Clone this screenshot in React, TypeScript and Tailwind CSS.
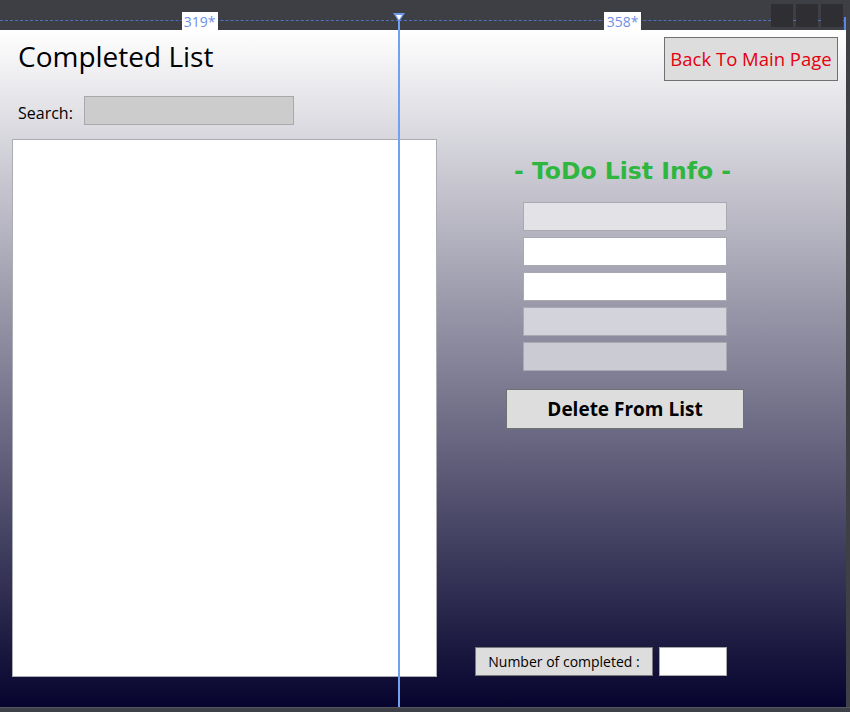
import React from 'react'

const ui = { fontFamily: '"Open Sans", "Noto Sans", sans-serif' }

function Ruler() {
  return (
    <div className="relative h-[30px] bg-[#3e3e45] flex">
      {/* column segments with size labels */}
      <div className="w-[399px] relative flex justify-center items-end">
        <div className="absolute left-0 right-0 top-[20px] border-t border-dashed border-[#4f72bf]" />
        <div className="relative bg-white h-[18px] w-[36px] flex items-center justify-center text-[14px] text-[#6f8fe6]" style={ui}>
          319*
        </div>
      </div>
      <div className="w-[447px] relative flex justify-center items-end">
        <div className="absolute left-0 right-0 top-[20px] border-t border-dashed border-[#4f72bf]" />
        <div className="relative bg-white h-[18px] w-[37px] flex items-center justify-center text-[14px] text-[#6f8fe6]" style={ui}>
          358*
        </div>
        <div className="absolute right-0 top-[17px] w-[2px] h-[13px] bg-[#5b86e6]" />
      </div>
      <div className="absolute right-[7px] top-[4px] flex gap-[3px]">
        <div className="w-[22px] h-[23px] bg-[#2e2e33]" />
        <div className="w-[22px] h-[23px] bg-[#2e2e33]" />
        <div className="w-[22px] h-[23px] bg-[#2e2e33]" />
      </div>
    </div>
  )
}

function Field({ tone }: { tone: string }) {
  return <div className={`h-[29px] w-[204px] border border-[#a9a9b4] ${tone}`} />
}

export default function App() {
  return (
    <div className="w-[850px] h-[712px] bg-[#3f3f46] relative overflow-hidden" style={ui}>
      <Ruler />

      <div className="flex">
        {/* Designer surface */}
        <div className="w-[846px] h-[677px] flex bg-[linear-gradient(to_bottom,#ffffff,#06032e)]">
          {/* Left column */}
          <div className="w-[399px] flex flex-col">
            <h1 className="ml-[18px] mt-[7px] text-[28px] leading-[38px] text-black">Completed List</h1>
            <div className="flex items-end mt-[21px] ml-[18px]">
              <span className="text-[16px] leading-[22px] text-black mb-[1px]">Search:</span>
              <div className="ml-[11px] w-[210px] h-[29px] bg-[#cccccc] border border-[#a9a9a9]" />
            </div>
            <div className="ml-[12px] mt-[14px] w-[425px] h-[538px] bg-white border border-[#abadb3]" />
          </div>

          {/* Right column */}
          <div className="flex-1 flex flex-col">
            <div className="self-end mr-[8px] mt-[7px] w-[174px] h-[44px] bg-[#dddddd] border border-[#707070] flex items-center justify-center whitespace-nowrap text-[18.5px] text-[#e3000f]">
              Back To Main Page
            </div>
            <div
              className="mt-[76px] text-center text-[23.5px] leading-[28px] font-bold text-[#2fb63f]"
              style={{ fontFamily: '"DejaVu Sans", Verdana, sans-serif' }}
            >
              - ToDo List Info -
            </div>
            <div className="ml-[124px] mt-[17px] flex flex-col gap-[6px]">
              <Field tone="bg-[#e2e2e7]" />
              <Field tone="bg-white" />
              <Field tone="bg-white" />
              <Field tone="bg-[#d3d3db]" />
              <Field tone="bg-[#cbcbd3]" />
            </div>
            <div className="ml-[107px] mt-[18px] w-[238px] h-[40px] bg-[#dddddd] border border-[#707070] flex items-center justify-center text-[19px] font-bold text-black">
              Delete From List
            </div>
            <div className="mt-auto mb-[31px] ml-[76px] flex gap-[6px]">
              <div className="w-[178px] h-[29px] bg-[#dddddd] border border-[#7a7a7a] flex items-center justify-center text-[14px] text-black">
                Number of completed :
              </div>
              <div className="w-[68px] h-[29px] bg-white border border-[#a9a9a9]" />
            </div>
          </div>
        </div>
        <div className="flex-1 bg-[#3f3f46]" />
      </div>
      <div className="h-[5px] bg-[#404048] border-t border-[#55555c]" />

      {/* Column splitter adornment over the surface */}
      <div className="absolute left-[398px] top-[20px] w-[2px] h-[687px] bg-[#74a0f0]" />
      <div className="absolute left-[393px] top-[13px] w-0 h-0 border-l-[6px] border-r-[6px] border-t-[9px] border-l-transparent border-r-transparent border-t-[#6d98ee]" />
      <div className="absolute left-[396px] top-[15px] w-0 h-0 border-l-[3px] border-r-[3px] border-t-[5px] border-l-transparent border-r-transparent border-t-white" />
    </div>
  )
}
